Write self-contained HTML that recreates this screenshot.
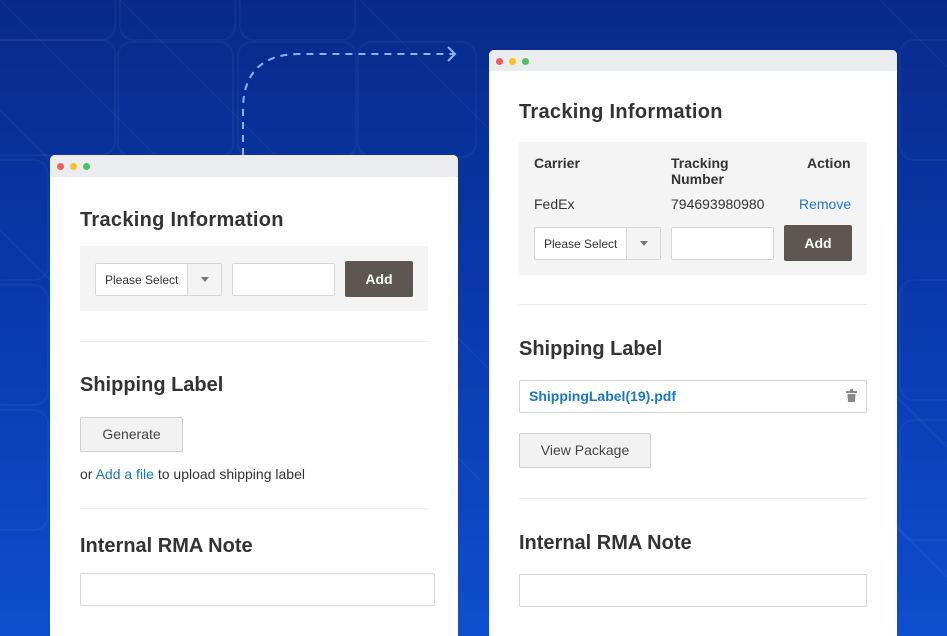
<!DOCTYPE html>
<html style="width:947px;height:636px;overflow:hidden"><head><style>
*{margin:0;padding:0;box-sizing:border-box}
body{width:947px;height:636px;overflow:hidden;position:relative;font-family:"Liberation Sans",Arial,sans-serif;color:#333;background:linear-gradient(180deg,#072a8a 0%,#0a3aae 50%,#0c4fcf 100%)}
.a{position:absolute}
.win{position:absolute;background:#fff;border-radius:5px 5px 0 0;overflow:hidden;width:408px}
.bar{height:22px;background:#ebeced;position:relative}
.dot{position:absolute;top:8px;width:7px;height:7px;border-radius:50%}
h2{position:absolute;font-size:20px;font-weight:bold;color:#333;white-space:nowrap}
.gray{position:absolute;background:#f4f4f4}
.sel{position:absolute;height:33px;border:1px solid #d6d6d6;background:#fff;border-radius:2px;font-size:12px;color:#333}
.sel span{position:absolute;left:9px;top:9px}
.sel i{position:absolute;right:0;top:0;width:34px;height:31px;background:#f4f4f4;border-left:1px solid #d6d6d6}
.sel i:after{content:"";position:absolute;left:13px;top:13px;border:4px solid transparent;border-top:5px solid #777}
.inp{position:absolute;height:33px;border:1px solid #d6d6d6;background:#fff;border-radius:2px}
.btn{position:absolute;width:68px;height:36px;background:#5d5652;color:#fff;font-weight:bold;font-size:14px;text-align:center;line-height:36px;border-radius:2px}
.hr{position:absolute;height:1px;background:#ececec}
.gbtn{position:absolute;height:35px;border:1px solid #cfcfcf;background:#f2f2f2;color:#444;font-size:14px;text-align:center;line-height:33px;border-radius:2px}
.t{position:absolute;font-size:14px;white-space:nowrap}
</style></head><body>
<svg class="a" style="left:0;top:0" width="947" height="636">
<g fill="none" stroke="rgba(255,255,255,0.04)" stroke-width="2">
<rect x="-10" y="-40" width="125" height="80" rx="14"/><rect x="120" y="-40" width="115" height="80" rx="14"/><rect x="240" y="-40" width="115" height="80" rx="14"/>
<rect x="-10" y="40" width="125" height="115" rx="14"/><rect x="118" y="42" width="115" height="115" rx="14"/><rect x="238" y="42" width="118" height="115" rx="14"/><rect x="358" y="42" width="118" height="115" rx="14"/>
<rect x="-10" y="160" width="58" height="120" rx="14"/><rect x="-10" y="285" width="58" height="120" rx="14"/><rect x="-10" y="410" width="58" height="120" rx="14"/>
<rect x="900" y="40" width="60" height="120" rx="14"/><rect x="900" y="280" width="60" height="120" rx="14"/><rect x="900" y="420" width="60" height="120" rx="14"/>
<line x1="0" y1="0" x2="480" y2="480"/><line x1="0" y1="110" x2="300" y2="410"/><line x1="120" y1="0" x2="600" y2="480"/><line x1="360" y1="0" x2="700" y2="340"/><line x1="0" y1="230" x2="120" y2="350"/><line x1="880" y1="380" x2="947" y2="447"/><line x1="880" y1="0" x2="947" y2="67"/><line x1="890" y1="520" x2="947" y2="577"/>
</g>
<path d="M243 155 V110 Q243 55 298 54 H455" fill="none" stroke="#8fb0ff" stroke-width="2" stroke-dasharray="7 6"/>
<path d="M448 47 L455 54 L448 61" fill="none" stroke="#8fb0ff" stroke-width="2"/>
</svg>

<div class="win" style="left:50px;top:155px;height:481px">
<div class="bar"><span class="dot" style="left:7px;background:#ec5f5d"></span><span class="dot" style="left:20px;background:#f5c02f"></span><span class="dot" style="left:33px;background:#4cc35a"></span></div>
<h2 style="left:30px;top:54px;letter-spacing:0.3px">Tracking Information</h2>
<div class="gray" style="left:30px;top:91px;width:348px;height:65px"></div>
<div class="sel" style="left:45px;top:108px;width:127px"><span>Please Select</span><i></i></div>
<div class="inp" style="left:182px;top:108px;width:103px"></div>
<div class="btn" style="left:295px;top:106px">Add</div>
<div class="hr" style="left:30px;top:186px;width:348px"></div>
<h2 style="left:30px;top:219px">Shipping Label</h2>
<div class="gbtn" style="left:30px;top:262px;width:103px">Generate</div>
<div class="t" style="left:30px;top:311px">or <span style="color:#1979c3">Add a file</span> to upload shipping label</div>
<div class="hr" style="left:30px;top:353px;width:348px"></div>
<h2 style="left:30px;top:380px">Internal RMA Note</h2>
<div class="inp" style="left:30px;top:418px;width:355px;height:33px"></div>
</div>

<div class="win" style="left:489px;top:50px;height:586px">
<div class="bar" style="height:21px"><span class="dot" style="left:7px;background:#ec5f5d"></span><span class="dot" style="left:20px;background:#f5c02f"></span><span class="dot" style="left:33px;background:#4cc35a"></span></div>
<h2 style="left:30px;top:51px;letter-spacing:0.3px">Tracking Information</h2>
<div class="gray" style="left:30px;top:92px;width:348px;height:133px"></div>
<div class="t" style="left:45px;top:105px;font-weight:bold">Carrier</div>
<div class="t" style="left:182px;top:105px;font-weight:bold;line-height:16px">Tracking<br>Number</div>
<div class="t" style="left:318px;top:105px;font-weight:bold">Action</div>
<div class="t" style="left:45px;top:146px">FedEx</div>
<div class="t" style="left:182px;top:146px">794693980980</div>
<div class="t" style="left:310px;top:146px;color:#1979c3">Remove</div>
<div class="sel" style="left:45px;top:177px;width:127px"><span>Please Select</span><i></i></div>
<div class="inp" style="left:182px;top:177px;width:103px"></div>
<div class="btn" style="left:295px;top:175px">Add</div>
<div class="hr" style="left:30px;top:254px;width:348px"></div>
<h2 style="left:30px;top:288px">Shipping Label</h2>
<div class="inp" style="left:30px;top:330px;width:348px;height:33px"></div>
<div class="t" style="left:40px;top:338px;color:#1979c3;font-weight:bold">ShippingLabel(19).pdf</div>
<svg class="a" style="left:357px;top:339px" width="12" height="14"><rect x="0" y="2" width="11" height="2" fill="#888"/><rect x="4" y="0" width="3" height="2" fill="#888"/><path d="M1.5 5 H9.5 L9 13 H2 Z" fill="#888"/></svg>
<div class="gbtn" style="left:30px;top:383px;width:132px">View Package</div>
<div class="hr" style="left:30px;top:448px;width:348px"></div>
<h2 style="left:30px;top:482px">Internal RMA Note</h2>
<div class="inp" style="left:30px;top:524px;width:348px;height:33px"></div>
</div>
</body></html>
